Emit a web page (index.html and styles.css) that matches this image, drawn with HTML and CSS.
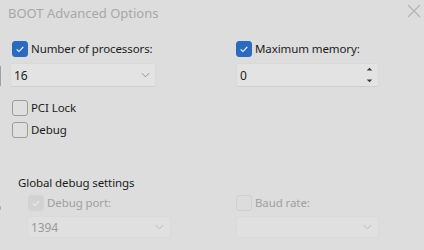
FILE: index.html
```html
<!DOCTYPE html>
<html>
<head>
<meta charset="utf-8">
<link rel="stylesheet" href="styles.css">
</head>
<body>
<div class="edge edge-top"></div>
<div class="edge edge-bottom"></div>
<header class="titlebar">
  <span class="title">BOOT Advanced Options</span>
  <svg class="close" width="14" height="14" viewBox="0 0 14 14"><path d="M1 1 L13 13 M13 1 L1 13" stroke="#b4b4b4" stroke-width="1.2" fill="none"/></svg>
</header>
<main class="content">
  <div class="grid">
    <div class="col">
      <label class="check"><span class="box on"><svg viewBox="0 0 16 16"><path d="M4.2 8.4 L6.8 10.9 L11.8 5.6" stroke="#fff" stroke-width="1.3" fill="none"/></svg></span>Number of processors:</label>
      <div class="field combo"><span>16</span><svg class="chev" viewBox="0 0 10 6"><path d="M1 1 L5 5 L9 1" stroke="#8a8a8a" stroke-width="1" fill="none"/></svg></div>
    </div>
    <div class="col">
      <label class="check"><span class="box on"><svg viewBox="0 0 16 16"><path d="M4.2 8.4 L6.8 10.9 L11.8 5.6" stroke="#fff" stroke-width="1.3" fill="none"/></svg></span>Maximum memory:</label>
      <div class="field spin"><span>0</span>
        <div class="spin-btns">
          <svg viewBox="0 0 8 5"><path d="M0.5 4.5 L4 0.8 L7.5 4.5 Z" fill="#3a3a3a"/></svg>
          <svg viewBox="0 0 8 5"><path d="M0.5 0.5 L4 4.2 L7.5 0.5 Z" fill="#3a3a3a"/></svg>
        </div>
      </div>
    </div>
  </div>
  <div class="singles">
    <label class="check"><span class="box"></span>PCI Lock</label>
    <label class="check"><span class="box"></span>Debug</label>
  </div>
  <section class="group">
    <div class="group-title">Global debug settings</div>
    <div class="grid group-grid">
      <div class="col">
        <label class="check disabled"><span class="box on-dis"><svg viewBox="0 0 16 16"><path d="M4.2 8.4 L6.8 10.9 L11.8 5.6" stroke="#ececec" stroke-width="1.3" fill="none"/></svg></span>Debug port:</label>
        <div class="field combo dis"><span>1394</span><svg class="chev" viewBox="0 0 10 6"><path d="M1 1 L5 5 L9 1" stroke="#b5b5b5" stroke-width="1" fill="none"/></svg></div>
      </div>
      <div class="col col-r">
        <label class="check disabled"><span class="box dis"></span>Baud rate:</label>
        <div class="field combo dis"><span></span><svg class="chev" viewBox="0 0 10 6"><path d="M1 1 L5 5 L9 1" stroke="#b5b5b5" stroke-width="1" fill="none"/></svg></div>
      </div>
    </div>
  </section>
</main>
</body>
</html>
```
FILE: styles.css
```css
html, body {
  margin: 0;
  padding: 0;
}
body {
  width: 424px;
  height: 250px;
  overflow: hidden;
  background: #dddddd;
  font-family: "Noto Sans", "Open Sans", sans-serif;
  font-size: 11.5px;
  letter-spacing: -0.1px;
  color: #1c1c1c;
  position: relative;
}
.edge {
  position: absolute;
  left: 0;
  width: 1px;
  background: #9aa3ad;
}
.edge-top { top: 66px; height: 20px; }
.edge-bottom { top: 206px; height: 4px; background: #b0b0b0; }
.titlebar {
  height: 32px;
  display: flex;
  align-items: flex-start;
  justify-content: space-between;
  padding: 3px 2px 0 8px;
  box-sizing: border-box;
}
.title {
  font-size: 13px;
  letter-spacing: 0;
  color: #a8a8a8;
  line-height: 20px;
}
.close {
  margin-top: 1px;
  margin-right: 1px;
}
.content {
  padding: 9px 0 0 12px;
}
.grid {
  display: grid;
  grid-template-columns: 224px 143px;
}
.col {
  display: flex;
  flex-direction: column;
  gap: 6px;
}
.check {
  display: flex;
  align-items: center;
  gap: 3px;
  height: 16px;
  line-height: 16px;
  white-space: nowrap;
}
.box {
  width: 14px;
  height: 14px;
  border: 1px solid #9c9c9c;
  border-radius: 3px;
  box-sizing: content-box;
  display: flex;
  background: #dfdfdf;
}
.box svg { width: 14px; height: 14px; }
.box.on {
  background: #2a6bc2;
  border-color: #2a6bc2;
}
.box.on-dis {
  background: #d2d2d2;
  border-color: #d2d2d2;
}
.box.dis {
  border-color: #d0d0d0;
  background: #dcdcdc;
}
.disabled { color: #a0a0a0; }
.field {
  height: 24px;
  box-sizing: border-box;
  display: flex;
  align-items: center;
  justify-content: space-between;
  background: #e3e3e3;
  border: 1px solid #d9d9d9;
  border-bottom-color: #cfcfcf;
  border-radius: 3px;
  padding: 0 0 0 3px;
  font-size: 12px;
}
.combo {
  width: 146px;
  margin-left: -2px;
  padding-right: 5px;
}
.chev { width: 9px; height: 6px; }
.spin {
  width: 143px;
  margin-left: 0;
  padding-right: 2px;
}
.spin-btns {
  display: flex;
  flex-direction: column;
  justify-content: space-between;
  height: 22px;
  padding: 3px 3px;
  box-sizing: border-box;
}
.spin-btns svg { width: 7px; height: 4px; }
.singles {
  display: flex;
  flex-direction: column;
  gap: 6px;
  margin-top: 13px;
}
.group {
  margin-top: 37px;
  padding-left: 6px;
}
.group-title {
  line-height: 16px;
  margin-bottom: 4px;
}
.group-grid {
  grid-template-columns: 208px 143px;
  padding-left: 10px;
}
.group-grid .col { gap: 5px; }
.combo.dis {
  background: #e0e0e0;
  border-color: #dadada;
  color: #9a9a9a;
  height: 22px;
  width: 144px;
  margin-left: -1px;
  padding-right: 6px;
}
.col-r .combo.dis { width: 143px; margin-left: 0; }
```
